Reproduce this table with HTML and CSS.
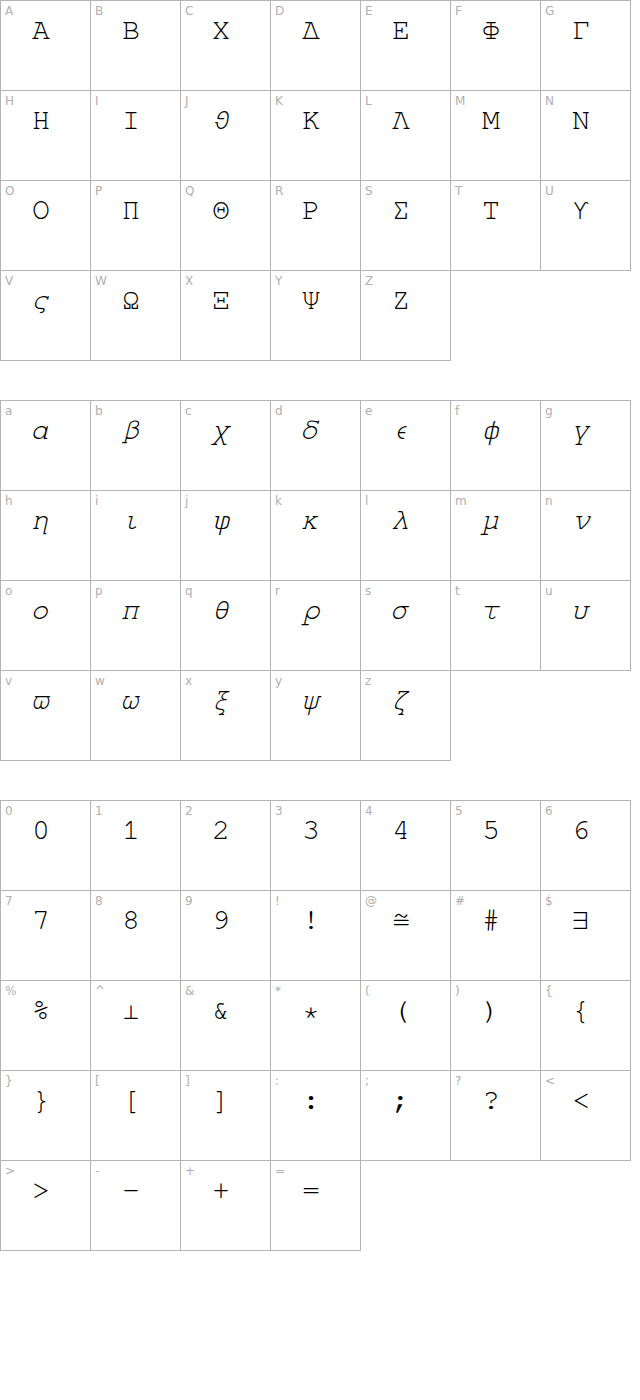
FILE: index.html
```html
<!DOCTYPE html>
<html lang="en">
<head>
  <meta charset="UTF-8">
  <title>Character map</title>
  <link rel="stylesheet" href="styles.css">
</head>
<body>

  <div class="grid">
    <div class="cell"><span class="key">A</span><div class="glyph">Α</div></div>
    <div class="cell"><span class="key">B</span><div class="glyph">Β</div></div>
    <div class="cell"><span class="key">C</span><div class="glyph">Χ</div></div>
    <div class="cell"><span class="key">D</span><div class="glyph">Δ</div></div>
    <div class="cell"><span class="key">E</span><div class="glyph">Ε</div></div>
    <div class="cell"><span class="key">F</span><div class="glyph">Φ</div></div>
    <div class="cell"><span class="key">G</span><div class="glyph">Γ</div></div>
    <div class="cell"><span class="key">H</span><div class="glyph">Η</div></div>
    <div class="cell"><span class="key">I</span><div class="glyph">Ι</div></div>
    <div class="cell"><span class="key">J</span><div class="glyph italic">ϑ</div></div>
    <div class="cell"><span class="key">K</span><div class="glyph">Κ</div></div>
    <div class="cell"><span class="key">L</span><div class="glyph">Λ</div></div>
    <div class="cell"><span class="key">M</span><div class="glyph">Μ</div></div>
    <div class="cell"><span class="key">N</span><div class="glyph">Ν</div></div>
    <div class="cell"><span class="key">O</span><div class="glyph">Ο</div></div>
    <div class="cell"><span class="key">P</span><div class="glyph">Π</div></div>
    <div class="cell"><span class="key">Q</span><div class="glyph">Θ</div></div>
    <div class="cell"><span class="key">R</span><div class="glyph">Ρ</div></div>
    <div class="cell"><span class="key">S</span><div class="glyph">Σ</div></div>
    <div class="cell"><span class="key">T</span><div class="glyph">Τ</div></div>
    <div class="cell"><span class="key">U</span><div class="glyph">ϒ</div></div>
    <div class="cell"><span class="key">V</span><div class="glyph italic">ς</div></div>
    <div class="cell"><span class="key">W</span><div class="glyph">Ω</div></div>
    <div class="cell"><span class="key">X</span><div class="glyph">Ξ</div></div>
    <div class="cell"><span class="key">Y</span><div class="glyph">Ψ</div></div>
    <div class="cell"><span class="key">Z</span><div class="glyph">Ζ</div></div>
  </div>

  <div class="grid">
    <div class="cell"><span class="key">a</span><div class="glyph italic">α</div></div>
    <div class="cell"><span class="key">b</span><div class="glyph italic">β</div></div>
    <div class="cell"><span class="key">c</span><div class="glyph italic">χ</div></div>
    <div class="cell"><span class="key">d</span><div class="glyph italic">δ</div></div>
    <div class="cell"><span class="key">e</span><div class="glyph italic">ϵ</div></div>
    <div class="cell"><span class="key">f</span><div class="glyph italic">ϕ</div></div>
    <div class="cell"><span class="key">g</span><div class="glyph italic">γ</div></div>
    <div class="cell"><span class="key">h</span><div class="glyph italic">η</div></div>
    <div class="cell"><span class="key">i</span><div class="glyph italic">ι</div></div>
    <div class="cell"><span class="key">j</span><div class="glyph italic">φ</div></div>
    <div class="cell"><span class="key">k</span><div class="glyph italic">κ</div></div>
    <div class="cell"><span class="key">l</span><div class="glyph italic">λ</div></div>
    <div class="cell"><span class="key">m</span><div class="glyph italic">μ</div></div>
    <div class="cell"><span class="key">n</span><div class="glyph italic">ν</div></div>
    <div class="cell"><span class="key">o</span><div class="glyph italic">ο</div></div>
    <div class="cell"><span class="key">p</span><div class="glyph italic">π</div></div>
    <div class="cell"><span class="key">q</span><div class="glyph italic">θ</div></div>
    <div class="cell"><span class="key">r</span><div class="glyph italic">ρ</div></div>
    <div class="cell"><span class="key">s</span><div class="glyph italic">σ</div></div>
    <div class="cell"><span class="key">t</span><div class="glyph italic">τ</div></div>
    <div class="cell"><span class="key">u</span><div class="glyph italic">υ</div></div>
    <div class="cell"><span class="key">v</span><div class="glyph italic">ϖ</div></div>
    <div class="cell"><span class="key">w</span><div class="glyph italic">ω</div></div>
    <div class="cell"><span class="key">x</span><div class="glyph italic">ξ</div></div>
    <div class="cell"><span class="key">y</span><div class="glyph italic">ψ</div></div>
    <div class="cell"><span class="key">z</span><div class="glyph italic">ζ</div></div>
  </div>

  <div class="grid">
    <div class="cell"><span class="key">0</span><div class="glyph">0</div></div>
    <div class="cell"><span class="key">1</span><div class="glyph">1</div></div>
    <div class="cell"><span class="key">2</span><div class="glyph">2</div></div>
    <div class="cell"><span class="key">3</span><div class="glyph">3</div></div>
    <div class="cell"><span class="key">4</span><div class="glyph">4</div></div>
    <div class="cell"><span class="key">5</span><div class="glyph">5</div></div>
    <div class="cell"><span class="key">6</span><div class="glyph">6</div></div>
    <div class="cell"><span class="key">7</span><div class="glyph">7</div></div>
    <div class="cell"><span class="key">8</span><div class="glyph">8</div></div>
    <div class="cell"><span class="key">9</span><div class="glyph">9</div></div>
    <div class="cell"><span class="key">!</span><div class="glyph">!</div></div>
    <div class="cell"><span class="key">@</span><div class="glyph">≅</div></div>
    <div class="cell"><span class="key">#</span><div class="glyph">#</div></div>
    <div class="cell"><span class="key">$</span><div class="glyph">∃</div></div>
    <div class="cell"><span class="key">%</span><div class="glyph">%</div></div>
    <div class="cell"><span class="key">^</span><div class="glyph">⊥</div></div>
    <div class="cell"><span class="key">&amp;</span><div class="glyph">&amp;</div></div>
    <div class="cell"><span class="key">*</span><div class="glyph">∗</div></div>
    <div class="cell"><span class="key">(</span><div class="glyph">(</div></div>
    <div class="cell"><span class="key">)</span><div class="glyph">)</div></div>
    <div class="cell"><span class="key">{</span><div class="glyph">{</div></div>
    <div class="cell"><span class="key">}</span><div class="glyph">}</div></div>
    <div class="cell"><span class="key">[</span><div class="glyph">[</div></div>
    <div class="cell"><span class="key">]</span><div class="glyph">]</div></div>
    <div class="cell"><span class="key">:</span><div class="glyph">:</div></div>
    <div class="cell"><span class="key">;</span><div class="glyph">;</div></div>
    <div class="cell"><span class="key">?</span><div class="glyph">?</div></div>
    <div class="cell"><span class="key">&lt;</span><div class="glyph">&lt;</div></div>
    <div class="cell"><span class="key">&gt;</span><div class="glyph">&gt;</div></div>
    <div class="cell"><span class="key">-</span><div class="glyph">−</div></div>
    <div class="cell"><span class="key">+</span><div class="glyph">+</div></div>
    <div class="cell"><span class="key">=</span><div class="glyph">=</div></div>
  </div>

</body>
</html>
```

FILE: styles.css
```css
body {
  margin: 0;
  background: white;
}
.grid {
  display: grid;
  grid-template-columns: repeat(7, 90px);
  grid-auto-rows: 90px;
  width: 630px;
  border-top: 1px solid #b4b4b4;
  border-left: 1px solid #b4b4b4;
  margin-bottom: 39px;
}
.cell {
  box-sizing: border-box;
  width: 90px;
  height: 90px;
  border-right: 1px solid #b4b4b4;
  border-bottom: 1px solid #b4b4b4;
  padding: 3px 0 0 4px;
}
.key {
  display: block;
  font-family: "DejaVu Sans", sans-serif;
  font-size: 12px;
  line-height: 14px;
  color: #b0b0b0;
}
.glyph {
  width: 72px;
  text-align: center;
  font-family: "FreeMono", "Nimbus Mono PS", "Courier 10 Pitch", "Liberation Serif", serif;
  font-size: 30px;
  line-height: 24px;
  color: #000;
}
.italic {
  font-style: italic;
}
```
